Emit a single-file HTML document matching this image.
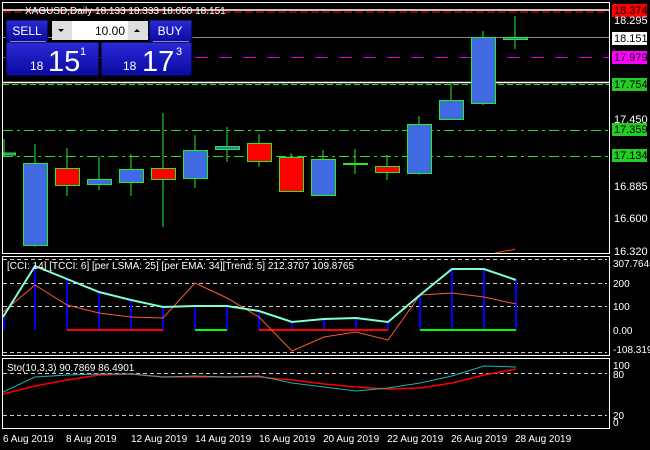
<!DOCTYPE html>
<html><head><meta charset="utf-8"><style>
body{margin:0;background:#000;width:650px;height:450px;overflow:hidden;font-family:"Liberation Sans",sans-serif}
svg{position:absolute;left:0;top:0}
.p{position:absolute;font-family:"Liberation Sans",sans-serif}
</style></head><body>
<svg width="650" height="450" font-family="Liberation Sans, sans-serif" font-size="10">
<!-- frames -->
<rect x="2.5" y="2.5" width="607" height="251" fill="none" stroke="#fff"/>
<rect x="2.5" y="256.5" width="607" height="99" fill="none" stroke="#fff"/>
<rect x="2.5" y="358.5" width="607" height="70" fill="none" stroke="#fff"/>
<!-- horizontal levels main -->
<line x1="3" y1="10" x2="609" y2="10" stroke="#fff" stroke-width="1.5"/>
<line x1="3" y1="12" x2="609" y2="12" stroke="#f00" stroke-dasharray="8,3"/>
<line x1="3" y1="37.5" x2="609" y2="37.5" stroke="#888"/>
<line x1="3" y1="57.5" x2="609" y2="57.5" stroke="#e000e0" stroke-dasharray="13,11"/>
<line x1="3" y1="82.5" x2="609" y2="82.5" stroke="#fff" stroke-width="1.5"/>
<line x1="3" y1="84.5" x2="609" y2="84.5" stroke="#2d2" stroke-dasharray="6,3"/>
<line x1="3" y1="130.5" x2="609" y2="130.5" stroke="#2d2" stroke-dasharray="10,4,3,4"/>
<line x1="3" y1="156.5" x2="609" y2="156.5" stroke="#2d2" stroke-dasharray="10,4,3,4"/>
<!-- candles -->
<g stroke="#2e2" stroke-width="1">
<line x1="4" y1="139" x2="4" y2="156"/><rect x="3.5" y="153" width="12" height="2" fill="#4169e1"/>
<line x1="35" y1="144" x2="35" y2="247"/><rect x="23.5" y="163.5" width="24" height="82" fill="#4169e1"/>
<line x1="67" y1="148" x2="67" y2="196"/><rect x="55.5" y="168.5" width="24" height="17" fill="#f00"/>
<line x1="99" y1="156" x2="99" y2="190"/><rect x="87.5" y="179.5" width="24" height="5" fill="#4169e1"/>
<line x1="131" y1="154" x2="131" y2="196"/><rect x="119.5" y="169.5" width="24" height="13" fill="#4169e1"/>
<line x1="163" y1="113" x2="163" y2="227"/><rect x="151.5" y="168.5" width="24" height="11" fill="#f00"/>
<line x1="195" y1="135" x2="195" y2="188"/><rect x="183.5" y="150.5" width="24" height="28" fill="#4169e1"/>
<line x1="227" y1="127" x2="227" y2="162"/><rect x="215.5" y="146.5" width="24" height="3" fill="#4169e1"/>
<line x1="259" y1="134" x2="259" y2="167"/><rect x="247.5" y="143.5" width="24" height="18" fill="#f00"/>
<line x1="291" y1="153" x2="291" y2="158"/><rect x="279.5" y="157.5" width="24" height="34" fill="#f00"/>
<line x1="323" y1="150" x2="323" y2="160"/><rect x="311.5" y="159.5" width="24" height="36" fill="#4169e1"/>
<line x1="355" y1="149" x2="355" y2="174"/><line x1="343" y1="164" x2="368" y2="164" stroke-width="2"/>
<line x1="387" y1="155" x2="387" y2="180"/><rect x="375.5" y="166.5" width="24" height="6" fill="#f00"/>
<line x1="419" y1="116" x2="419" y2="175"/><rect x="407.5" y="124.5" width="24" height="49" fill="#4169e1"/>
<line x1="451" y1="82" x2="451" y2="100"/><rect x="439.5" y="100.5" width="24" height="19" fill="#4169e1"/>
<line x1="483" y1="31" x2="483" y2="105"/><rect x="471.5" y="37.5" width="24" height="66" fill="#4169e1"/>
<line x1="515" y1="16" x2="515" y2="49"/><rect x="503.5" y="37.5" width="24" height="2" fill="#4169e1"/>
</g>
<polyline points="495,253 505,251 512,250 515,249" fill="none" stroke="#f40"/>
<!-- price labels -->
<g fill="#fff">
<rect x="612" y="4" width="35" height="13" fill="#f00"/><text x="614" y="14" fill="#000" font-size="11">18.374</text>
<text x="614" y="24" font-size="11">18.295</text>
<rect x="612" y="32" width="35" height="13" fill="#fff"/><text x="614" y="42" fill="#000" font-size="11">18.151</text>
<rect x="612" y="51" width="35" height="13" fill="#f0f"/><text x="614" y="61" fill="#000" font-size="11">17.979</text>
<rect x="612" y="78" width="35" height="13" fill="#2c2"/><text x="614" y="88" fill="#000" font-size="11">17.754</text>
<text x="614" y="123" font-size="11">17.450</text>
<rect x="612" y="123" width="35" height="13" fill="#2c2"/><text x="614" y="133" fill="#000" font-size="11">17.359</text>
<rect x="612" y="149" width="35" height="13" fill="#2c2"/><text x="614" y="159" fill="#000" font-size="11">17.134</text>
<text x="614" y="190" font-size="11">16.885</text>
<text x="614" y="222" font-size="11">16.600</text>
<text x="614" y="255" font-size="11">16.320</text>
<text x="25" y="14" font-size="10">XAGUSD,Daily  18.133 18.333 18.050 18.151</text>
</g>
<!-- CCI panel -->
<g stroke="#ccc" stroke-dasharray="4,3"><line x1="3" y1="259.5" x2="607" y2="259.5"/><line x1="3" y1="283.5" x2="607" y2="283.5"/><line x1="3" y1="306.5" x2="607" y2="306.5"/><line x1="3" y1="352.5" x2="607" y2="352.5"/>
<line x1="3" y1="373.5" x2="607" y2="373.5"/><line x1="3" y1="415.5" x2="607" y2="415.5"/></g>
<g stroke="#00f" stroke-width="2">
<line x1="4" y1="317" x2="4" y2="330"/><line x1="35" y1="266" x2="35" y2="330"/><line x1="67" y1="279" x2="67" y2="330"/><line x1="99" y1="292" x2="99" y2="330"/><line x1="131" y1="300" x2="131" y2="330"/><line x1="163" y1="307" x2="163" y2="330"/><line x1="195" y1="306" x2="195" y2="330"/><line x1="227" y1="306" x2="227" y2="330"/><line x1="259" y1="311" x2="259" y2="330"/><line x1="292" y1="322" x2="292" y2="330"/><line x1="324" y1="319" x2="324" y2="330"/><line x1="356" y1="318" x2="356" y2="330"/><line x1="388" y1="322" x2="388" y2="330"/><line x1="420" y1="295" x2="420" y2="330"/><line x1="452" y1="269" x2="452" y2="330"/><line x1="484" y1="269" x2="484" y2="330"/><line x1="516" y1="280" x2="516" y2="330"/>
</g>
<g stroke-width="2"><line x1="67" y1="330" x2="163" y2="330" stroke="#f00"/><line x1="195" y1="330" x2="227" y2="330" stroke="#0f0"/><line x1="259" y1="330" x2="388" y2="330" stroke="#f00"/><line x1="420" y1="330" x2="516" y2="330" stroke="#0f0"/></g>
<polyline points="3,312 35,285 67,305 99,313 131,317 163,318 195,283 227,298 259,317 292,351 324,337 356,332 388,340 420,295 452,293 484,297 516,304" fill="none" stroke="#f53"/>
<polyline points="3,317 35,266 67,279 99,292 131,300 163,307 195,306 227,306 259,311 292,322 324,319 356,318 388,322 420,295 452,269 484,269 516,280" fill="none" stroke="#7fffd4" stroke-width="2"/>
<!-- Stoch -->
<polyline points="3,394 35,386 67,380 99,375 131,374 163,377 195,377 227,377 259,377 292,380 324,384 356,387 388,389 420,388 452,383 484,375 516,369" fill="none" stroke="#f00" stroke-width="1.5"/>
<polyline points="3,392 35,377 67,375 99,374 131,374 163,377 195,376 227,377 259,376 292,383 324,387 356,391 388,388 420,383 452,376 484,366 516,367" fill="none" stroke="#20b2aa"/>
<g fill="#fff" font-size="10">
<text x="7" y="269">[CCI: 14] [TCCI: 6] [per LSMA: 25] [per EMA: 34][Trend: 5]  212.3707 109.8765</text>
<text x="7" y="371">Sto(10,3,3) 90.7869 86.4901</text>
<text x="613" y="267">307.7646</text><text x="613" y="287">200</text><text x="613" y="310">100</text><text x="613" y="334">0.00</text><text x="613" y="353">-108.319</text>
<text x="613" y="369">100</text><text x="613" y="378">80</text><text x="613" y="419">20</text><text x="613" y="426">0</text>
<text x="3" y="442">6 Aug 2019</text><text x="66" y="442">8 Aug 2019</text><text x="131" y="442">12 Aug 2019</text><text x="195" y="442">14 Aug 2019</text><text x="259" y="442">16 Aug 2019</text><text x="323" y="442">20 Aug 2019</text><text x="387" y="442">22 Aug 2019</text><text x="451" y="442">26 Aug 2019</text><text x="515" y="442">28 Aug 2019</text>
</g>
<!-- trade panel -->
<defs><linearGradient id="g" x1="0" y1="0" x2="0" y2="1"><stop offset="0" stop-color="#2a2ad8"/><stop offset="1" stop-color="#0a0aa0"/></linearGradient></defs>
<rect x="6" y="20" width="42" height="22" fill="url(#g)" stroke="#000"/>
<rect x="149" y="20" width="43" height="22" fill="url(#g)" stroke="#000"/>
<rect x="6" y="42" width="93" height="34" fill="url(#g)" stroke="#000"/>
<rect x="101" y="42" width="91" height="34" fill="url(#g)" stroke="#000"/>
<rect x="52" y="21" width="20" height="19" fill="#ddd"/>
<rect x="72" y="21" width="56" height="19" fill="#fff"/>
<rect x="128" y="21" width="20" height="19" fill="#ddd"/>
<path d="M58 29h6l-3 3z" fill="#000"/><path d="M134 32h6l-3-3z" fill="#000"/>
<text x="125" y="35" text-anchor="end" fill="#000" font-size="12">10.00</text>
<line x1="10" y1="41.5" x2="46" y2="41.5" stroke="#88a"/><line x1="153" y1="41.5" x2="189" y2="41.5" stroke="#88a"/>
<text x="27" y="35" fill="#fff" font-size="12" text-anchor="middle">SELL</text>
<text x="170" y="35" fill="#fff" font-size="12" text-anchor="middle">BUY</text>
<text x="30" y="70" fill="#fff" font-size="12">18</text><text x="48" y="71" fill="#fff" font-size="29">15</text><text x="80" y="55" fill="#fff" font-size="11">1</text>
<text x="123" y="70" fill="#fff" font-size="12">18</text><text x="142" y="71" fill="#fff" font-size="29">17</text><text x="176" y="55" fill="#fff" font-size="11">3</text>
</svg>
</body></html>
